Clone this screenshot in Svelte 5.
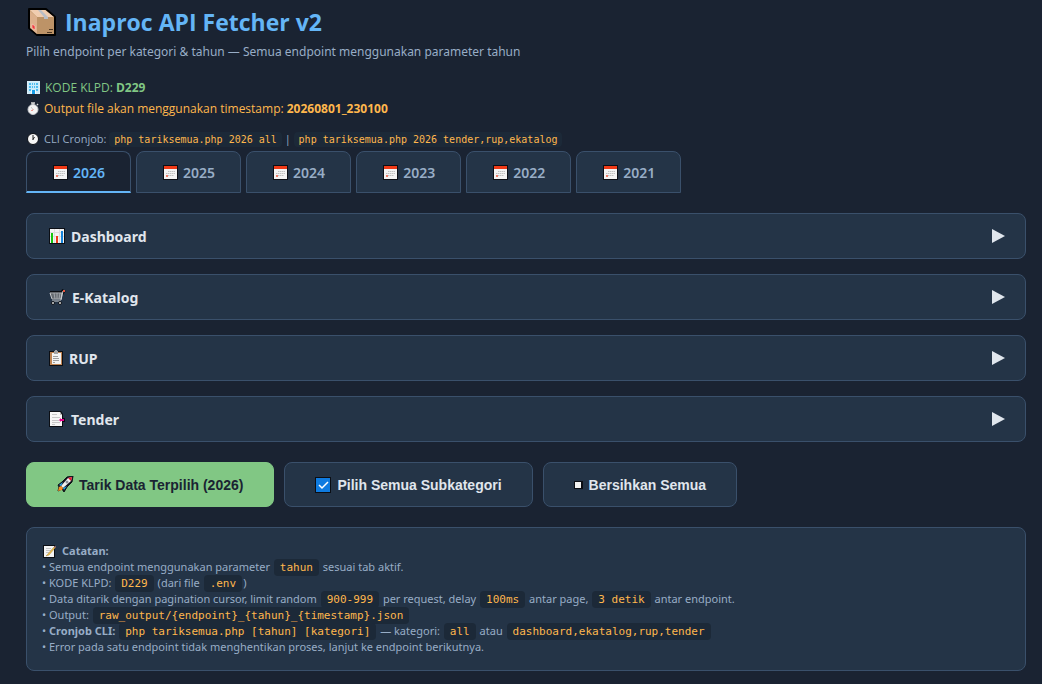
<script>
    const years = [2026, 2025, 2024, 2023, 2022, 2021];
    const categories = [
        { id: "dashboard", label: "Dashboard", width: 16 },
        { id: "ekatalog", label: "E-Katalog", width: 17 },
        { id: "rup", label: "RUP", width: 14 },
        { id: "tender", label: "Tender", width: 16 },
    ];

    let activeYear = $state(2026);
    let selected = $state([]);
    let open = $state({});

    const selectAll = () => (selected = categories.map((c) => c.id));
    const clearAll = () => (selected = []);
    const toggle = (id) => (open[id] = !open[id]);
</script>

{#snippet icon(name, width, height)}
    <svg class="icon" {width} {height} viewBox="0 0 {width} {height}" aria-hidden="true">
        {#if name === "box"}
            <path d="M1 1h17l9 8v18H9L1 20z" fill="#c39a6b" stroke="#000" stroke-width="2" stroke-linejoin="round" />
            <path d="M2 2h15l9 7H9z" fill="#f0cdb0" />
            <path d="M2 3l7 6v17l-7-6z" fill="#dcb08c" />
            <path d="M9 9h17v17H9z" fill="#bd9367" />
            <path d="M10 2h3l7 7v2h-4V9z" fill="#b9bdc5" />
            <path d="M4 16l3 2v4l-3-2z" fill="#f03a3e" stroke="#f6d9c8" stroke-width=".6" />
            <path d="M21 21.500h4M19 24.500h5" stroke="#4b3621" />
        {:else if name === "building"}
            <path d="M0 0h13v13H0z" fill="#d9eef8" />
            <path d="M1 1h11v11H1z" fill="#c9eafa" />
            <path d="M2 3h2M5 3h1M7 3h1M9 3h2M2 6h2M5 6h1M7 6h1M9 6h2M2 9h2M9 9h2" stroke="#4dbdf0" stroke-width="2" />
            <path d="M4 13V9h5v4z" fill="#eef7fb" />
            <path d="M5 13V9h3v4z" fill="#159de8" />
        {:else if name === "stopwatch"}
            <path d="M4 1h4M6 1v2M10 2l1 1" stroke="#d9d9d9" stroke-width="1.500" />
            <circle cx="6" cy="7.500" r="5" fill="#f4f4f4" stroke="#c5c8cd" />
            <path d="M4 5l2 2.500" stroke="#c4c4c4" />
            <path d="M6 7.500l-1.500 1.500" stroke="#e34234" />
        {:else if name === "clock"}
            <circle cx="6" cy="6" r="5.500" fill="#f7f7f7" stroke="#0b0e14" />
            <path d="M6 2v5M6 6.500L7.500 4" fill="none" stroke="#222" />
        {:else if name === "calendar"}
            <path d="M0 0h15v15H0z" fill="#0b0e14" />
            <path d="M1 4h13v10H1z" fill="#f3f3f3" />
            <path d="M1 1h13v3H1z" fill="#f03a17" />
            <path d="M5 6.500h7M3 8.500h9M3 10.500h8" stroke="#c0c0c0" stroke-dasharray="1.500 .5" />
            <path d="M3 10h2v2H3z" fill="#ee7b67" />
        {:else if name === "dashboard"}
            <path d="M0 0h16v16H0z" fill="#0b0e14" />
            <path d="M1 1h14v14H1z" fill="#f4f4f4" />
            <path d="M1 4.500h14M1 8.500h14M5.500 1v14M10.500 1v14" stroke="#dedede" />
            <path d="M2 5h2v10H2z" fill="#16c60c" />
            <path d="M7 8h2v7H7z" fill="#f03a17" />
            <path d="M12 3h2v12h-2z" fill="#1684dc" />
        {:else if name === "ekatalog"}
            <path d="M1 4h12l2-3" fill="none" stroke="#0b0e14" stroke-width="4" />
            <path d="M1 4h12l-1 6H3z" fill="#3b3f45" stroke="#c7c9cc" />
            <path d="M2 6h11M2 8h10M5 4l1 6M8 4v6M11 4l-1 6" stroke="#b9bec4" stroke-width=".7" />
            <path d="M12 11l2-9h2M3 12h9" fill="none" stroke="#cfd1d4" />
            <path d="M14 1h2v2h-2z" fill="#e9563e" />
            <circle cx="4" cy="14" r="1.500" fill="#e8e8e8" stroke="#0b0e14" />
            <circle cx="11" cy="14" r="1.500" fill="#e8e8e8" stroke="#0b0e14" />
        {:else if name === "rup"}
            <path d="M0 1h14v15H0z" fill="#0b0e14" />
            <path d="M1 2h12v13H1z" fill="#bf8452" />
            <path d="M3 3h9v11H3z" fill="#f3f3f3" />
            <path d="M5 1h1V0h2v1h1v3H5z" fill="#a2a2a2" />
            <path d="M4 6.500h5M4 8.500h6M4 10.500h6M4 12.500h2" stroke="#9e9e9e" />
        {:else if name === "tender"}
            <path d="M0 0h12l2 3v4h2v4h-2v5H0z" fill="#0b0e14" />
            <path d="M1 1h10l2 3v11H1z" fill="#f6f6f6" />
            <path d="M11 1v3h2z" fill="#bcbcbc" />
            <path d="M3 3.500h5M3 6.500h8M3 9.500h7M3 11.500h8M3 13.500h3" stroke="#c8c8c8" />
            <path d="M10 9l2-2v1h3v2h-3v1z" fill="#e3008c" />
        {:else if name === "rocket"}
            <path d="M1 9l4-3 5-5 6-1-1 6-5 5-3 5-2-3-4 2 1-4z" fill="#10131a" stroke="#10131a" />
            <path d="M4 10l7-8 4-1-1 4-8 7z" fill="#f1f1f1" />
            <path d="M11 2l4-1-1 4z" fill="#e8112d" />
            <path d="M2 9l4-3-2 4zM7 14l3-4-4 2z" fill="#22a7f0" />
            <circle cx="10" cy="6" r="1.500" fill="#8c9299" />
            <path d="M1 15l1-4 2-1 2 2-1 2z" fill="#f58d22" />
        {:else if name === "check"}
            <path d="M0 0h16v16H0z" fill="#0b0e14" />
            <path d="M1 1h14v14H1z" fill="#0f7be0" />
            <path d="M4 8l3 3 6-6" fill="none" stroke="#fff" stroke-width="1.500" />
        {:else if name === "square"}
            <path d="M0 0h9v8H0z" fill="#0b0e14" />
            <path d="M1 1h6v6H1z" fill="#f2f2f2" />
        {:else if name === "memo"}
            <path d="M0 0h12v13H0z" fill="#0b0e14" />
            <path d="M1 1h10v11H1z" fill="#f4f4f4" />
            <path d="M3 3.500h5M3 5.500h5M3 7.500h3" stroke="#c6c6c6" />
            <path d="M4 10l7-8 1 1-6 7-3 1z" fill="#f2c14a" stroke="#a5823c" stroke-width=".5" />
            <path d="M11 2l1-1 1 1-1 1z" fill="#d98a7b" />
        {:else if name === "arrow"}
            <path d="M0 0l13 7-13 7z" fill="#e0e6ed" />
        {/if}
    </svg>
{/snippet}

<main class="container">
    <header>
        <h1>{@render icon("box", 28, 28)}Inaproc API Fetcher v2</h1>
        <p class="subtitle">Pilih endpoint per kategori &amp; tahun — Semua endpoint menggunakan parameter tahun</p>
        <p class="info klpd">{@render icon("building", 13, 13)}<span>KODE KLPD: <strong>D229</strong></span></p>
        <p class="info timestamp">
            {@render icon("stopwatch", 12, 13)}<span>Output file akan menggunakan timestamp: <strong>20260801_230100</strong></span>
        </p>
        <p class="info cron">
            {@render icon("clock", 12, 12)}<span
                >CLI Cronjob: <code>php tariksemua.php 2026 all</code> | <code>php tariksemua.php 2026 tender,rup,ekatalog</code></span
            >
        </p>
    </header>

    <nav class="tabs">
        {#each years as year}
            <button class="tab" class:active={year === activeYear} onclick={() => (activeYear = year)}>
                {@render icon("calendar", 15, 15)}{year}
            </button>
        {/each}
    </nav>

    <section class="categories">
        {#each categories as category (category.id)}
            <button class="category" class:open={open[category.id]} onclick={() => toggle(category.id)}>
                <span class="category-title">{@render icon(category.id, category.width, 16)}{category.label}</span>
                <span class="arrow">{@render icon("arrow", 13, 14)}</span>
            </button>
        {/each}
    </section>

    <div class="actions">
        <button class="btn btn-primary">{@render icon("rocket", 17, 17)}Tarik Data Terpilih ({activeYear})</button>
        <button class="btn" onclick={selectAll}>{@render icon("check", 16, 16)}Pilih Semua Subkategori</button>
        <button class="btn" onclick={clearAll}>{@render icon("square", 9, 8)}Bersihkan Semua</button>
    </div>

    <section class="notes">
        <p class="notes-title">{@render icon("memo", 13, 13)}<strong>Catatan:</strong></p>
        <p>• Semua endpoint menggunakan parameter <code>tahun</code> sesuai tab aktif.</p>
        <p>• KODE KLPD: <code>D229</code> (dari file <code>.env</code>)</p>
        <p>
            • Data ditarik dengan pagination cursor, limit random <code>900-999</code> per request, delay
            <code>100ms</code> antar page, <code>3 detik</code> antar endpoint.
        </p>
        <p>• Output: <code>{"raw_output/{endpoint}_{tahun}_{timestamp}.json"}</code></p>
        <p>
            • <strong>Cronjob CLI:</strong> <code>php tariksemua.php [tahun] [kategori]</code> — kategori:
            <code>all</code> atau <code>dashboard,ekatalog,rup,tender</code>
        </p>
        <p>• Error pada satu endpoint tidak menghentikan proses, lanjut ke endpoint berikutnya.</p>
    </section>
</main>

<style>
    :global(body) {
        background: #1a2332;
    }

    .container {
        padding: 6px 16px 13px 26px;
        font-family: "Segoe UI", "Noto Sans", sans-serif;
        color: #e0e6ed;
    }

    h1,
    p {
        margin: 0;
    }

    .icon {
        flex: none;
    }

    /* header */
    h1 {
        display: flex;
        align-items: center;
        gap: 9px;
        padding-left: 2px;
        font-family: "Segoe UI", "Open Sans", sans-serif;
        font-size: 23px;
        line-height: 32px;
        color: #64b5f6;
    }

    .subtitle {
        margin: 5px 0 16px;
        font-size: 12px;
        line-height: 18px;
        color: #98adc6;
    }

    .info {
        display: flex;
        align-items: center;
        gap: 5px;
        padding-left: 1px;
        font-family: "Segoe UI", "Open Sans", sans-serif;
        font-size: 12px;
        line-height: 21px;
    }

    .klpd {
        color: #81c784;
    }

    .timestamp {
        color: #ffb74d;
    }

    .cron {
        margin-top: 9px;
        font-size: 11px;
        color: #98adc6;
    }

    code {
        margin: 0 1px;
        padding: 2px 6px;
        border-radius: 4px;
        background: #1c2938;
        font-family: Consolas, "DejaVu Sans Mono", monospace;
        font-size: 11px;
        line-height: 12px;
        color: #ffb74d;
    }

    .cron code {
        margin: 0;
        padding: 2px 5px;
        font-size: 10px;
    }

    /* tabs */
    .tabs {
        display: flex;
        gap: 5px;
        margin-top: 2px;
    }

    button {
        font-family: inherit;
        cursor: pointer;
    }

    .tab {
        display: flex;
        align-items: center;
        justify-content: center;
        gap: 5px;
        height: 42px;
        padding: 0 25px 0 26px;
        border: 1px solid #3a506b;
        border-radius: 8px 8px 0 0;
        background: #243447;
        font-size: 14px;
        font-weight: 600;
        color: #98adc6;
    }

    .tab.active {
        padding-top: 1px;
        border-bottom: 2px solid #64b5f6;
        background: #1a2332;
        color: #64b5f6;
    }

    /* categories */
    .categories {
        display: flex;
        flex-direction: column;
        gap: 15px;
        margin-top: 20px;
    }

    .category {
        display: flex;
        align-items: center;
        justify-content: space-between;
        height: 46px;
        padding: 0 20px 0 22px;
        border: 1px solid #3a506b;
        border-radius: 8px;
        background: #243447;
        font-size: 14px;
        font-weight: 700;
        color: #e0e6ed;
    }

    .category-title {
        display: flex;
        align-items: center;
        gap: 6px;
    }

    .arrow {
        display: flex;
    }

    .category.open .arrow {
        transform: rotate(90deg);
    }

    /* actions */
    .actions {
        display: flex;
        gap: 10px;
        margin: 20px 0;
    }

    .btn {
        display: flex;
        align-items: center;
        gap: 6px;
        height: 45px;
        padding: 0 30px;
        border: 1px solid #3a506b;
        border-radius: 8px;
        background: #243447;
        font-family: Arial, "Liberation Sans", sans-serif;
        font-size: 14px;
        font-weight: 700;
        color: #e0e6ed;
    }

    .btn-primary {
        gap: 5px;
        border-color: #81c784;
        background: #81c784;
        color: #1a2332;
    }

    /* notes */
    .notes {
        padding: 15px;
        border: 1px solid #3a506b;
        border-radius: 8px;
        background: #243447;
        font-size: 11px;
        line-height: 16px;
        color: #98adc6;
    }

    .notes-title {
        display: flex;
        align-items: center;
        gap: 6px;
        padding-left: 1px;
    }
</style>
